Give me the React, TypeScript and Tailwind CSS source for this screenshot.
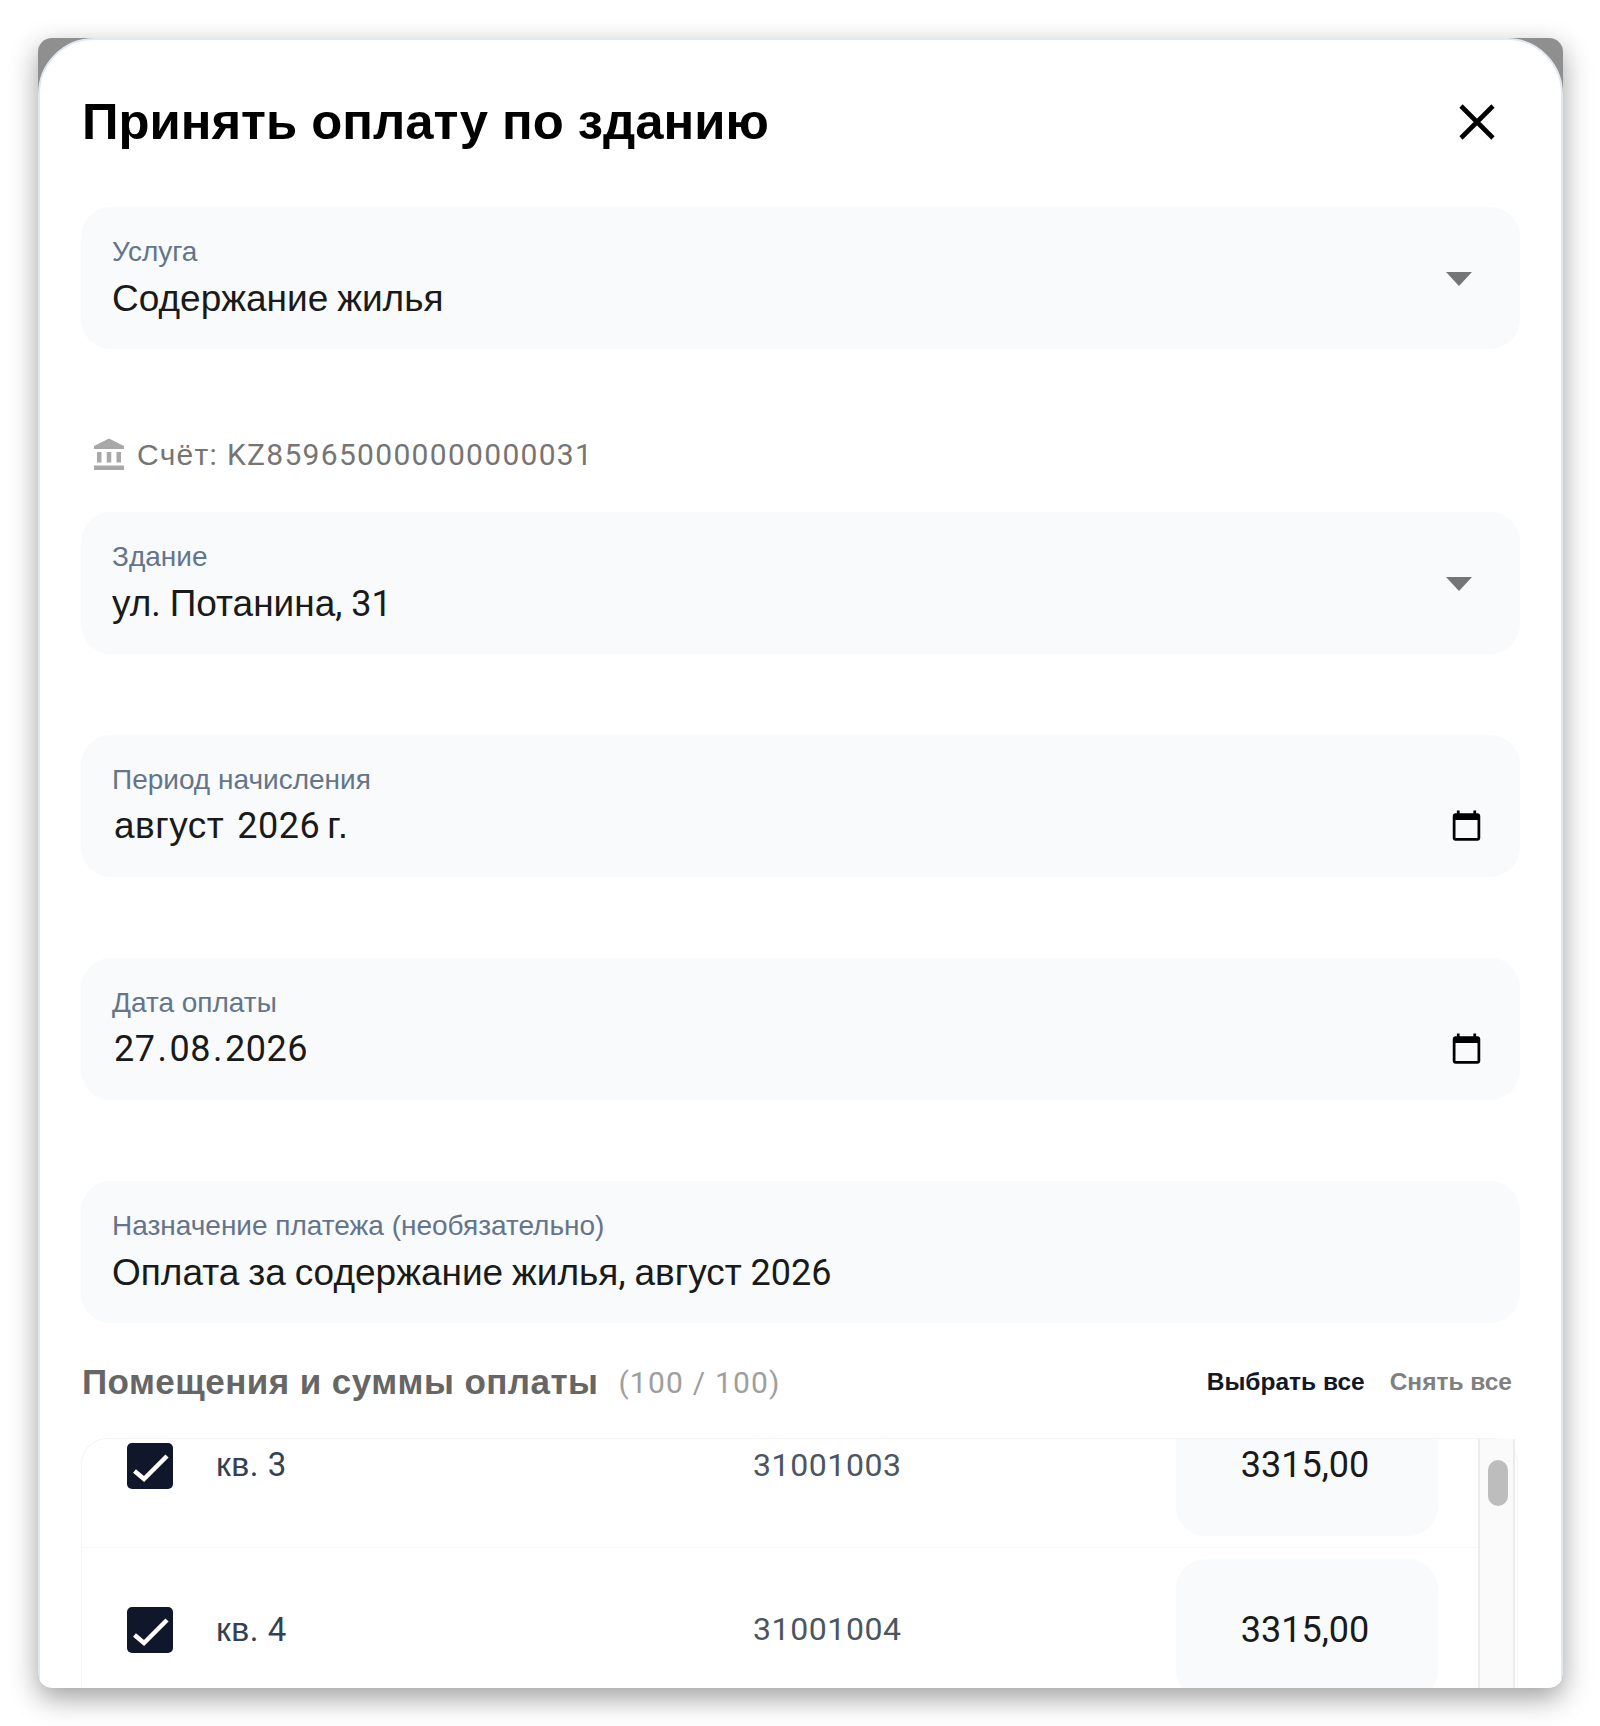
import React from 'react';

const roboto = "font-['Roboto',sans-serif]";
const helv = "font-['Liberation_Sans',Arial,sans-serif]";

function Mix({ text }: { text: string }) {
  return (
    <>
      {text.split(/([А-Яа-яЁё]+)/).map((part, i) => (
        <span key={i} className={i % 2 === 1 ? `text-[1.028em] ${helv}` : roboto}>
          {part}
        </span>
      ))}
    </>
  );
}

function Caret() {
  return (
    <svg width="26" height="14" viewBox="0 0 26 14" className="mt-[2px] shrink-0">
      <path d="M0 0h26L13 14z" fill="#757575" />
    </svg>
  );
}

function CalendarIcon() {
  return (
    <svg width="33" height="33" viewBox="0 0 24 24" className="mt-[38px] shrink-0">
      <path
        d="M20 3h-1V1h-2v2H7V1H5v2H4c-1.1 0-2 .9-2 2v16c0 1.1.9 2 2 2h16c1.1 0 2-.9 2-2V5c0-1.1-.9-2-2-2zm0 18H4V8h16v13z"
        fill="#000"
      />
    </svg>
  );
}

function Field({
  label,
  children,
  date,
  icon,
  className,
}: {
  label: string;
  children: React.ReactNode;
  date?: boolean;
  icon?: React.ReactNode;
  className?: string;
}) {
  return (
    <div className={`flex h-[142px] items-center justify-between rounded-[30px] bg-[#f8fafc] pl-[31px] ${date ? 'pr-[37px]' : 'pr-[48px]'} ${className ?? ''}`}>
      <div>
        <div className={`text-[28px] leading-[36px] text-[#64748b] ${helv}`}>{label}</div>
        <div className={`mt-[4px] text-[36px] leading-[48px] text-[#1a1a1a] ${date ? 'pl-[2px]' : ''}`}>{children}</div>
      </div>
      {icon}
    </div>
  );
}

function Check() {
  return (
    <div className="flex h-[46px] w-[46px] shrink-0 items-center justify-center rounded-[5px] bg-[#10172a]">
      <svg width="46" height="46" viewBox="0 0 46 46">
        <path d="M7.5 28l9.5 8L40 13" fill="none" stroke="#fff" strokeWidth="4.5" />
      </svg>
    </div>
  );
}

function Row({ name, code, last }: { name: string; code: string; last?: boolean }) {
  return (
    <div className={`flex h-[164px] items-center pl-[45px] ${last ? '' : 'border-b border-[#f5f7fa]'}`}>
      <Check />
      <div className="ml-[43px] mt-[-2px] w-[537px] text-[33px] tracking-[0.5px] text-[#334155]">
        <Mix text={name} />
      </div>
      <div className={`mt-[-2px] w-[423px] text-[32px] tracking-[0.6px] text-[#4b5563] ${roboto}`}>{code}</div>
      <div className={`mt-[-1px] flex h-[141px] w-[262px] shrink-0 items-center justify-center rounded-[30px] bg-[#f8fafc] pr-[4px] text-[36px] text-[#1a1a1a] ${roboto}`}>
        3315,00
      </div>
    </div>
  );
}

export default function App() {
  return (
    <div className="h-[1726px] bg-white py-[38px] pl-[38px] pr-[37px]">
      <div className="h-[1650px] overflow-hidden rounded-[14px] bg-[#8f8f8f] shadow-[0_10px_28px_rgba(0,0,0,0.38)]">
        <div className="h-[1700px] rounded-t-[56px] border-2 border-[#e2e8f0] bg-white px-[41px]">
          {/* Header */}
          <div className="mt-[42px] flex h-[80px] items-center justify-between pl-px pr-[25px]">
            <h1 className={`text-[50.8px] font-bold leading-none text-black ${helv}`}>Принять оплату по зданию</h1>
            <svg width="36" height="36" viewBox="0 0 36 36">
              <path d="M2 2l32 32M34 2L2 34" stroke="#000" strokeWidth="4.6" fill="none" />
            </svg>
          </div>

          <Field className="mt-[45px]" label="Услуга" icon={<Caret />}>
            <Mix text="Содержание жилья" />
          </Field>

          <div className="mt-[85px] flex h-[40px] items-center pl-[10px] text-[30px] tracking-[1.3px] text-[#757575]">
            <svg width="36" height="36" viewBox="0 0 24 24" className="mr-[10px] mt-px shrink-0">
              <path d="M4 10h3v7H4zM10.5 10h3v7h-3zM2 19h20v3H2zM17 10h3v7h-3zM12 1 2 6v2h20V6z" fill="#a8a8a8" />
            </svg>
            <span className={roboto}>
              <span className={helv}>Счёт</span>: KZ859650000000000031
            </span>
          </div>

          <Field className="mt-[38px]" label="Здание" icon={<Caret />}>
            <Mix text="ул. Потанина, 31" />
          </Field>

          <Field className="mt-[81px]" label="Период начисления" date icon={<CalendarIcon />}>
            <span className="flex items-baseline">
              <span className={`mr-[13px] text-[37px] tracking-[0.5px] ${helv}`}>август</span>
              <span className={`mr-[7px] tracking-[0.5px] ${roboto}`}>2026</span>
              <span className={`text-[37px] tracking-[1.5px] ${helv}`}>г.</span>
            </span>
          </Field>

          <Field className="mt-[81px]" label="Дата оплаты" date icon={<CalendarIcon />}>
            <span className={`flex items-baseline tracking-[0.5px] ${roboto}`}>
              <span>27</span>
              <span className="px-[2px]">.</span>
              <span>08</span>
              <span className="px-[2px]">.</span>
              <span>2026</span>
            </span>
          </Field>

          <Field className="mt-[81px]" label="Назначение платежа (необязательно)">
            <Mix text="Оплата за содержание жилья, август 2026" />
          </Field>

          {/* Rooms */}
          <div className="mt-[39px] flex h-[40px] items-center justify-between pl-px pr-[8px]">
            <div className="flex items-center">
              <span className={`text-[35px] font-bold tracking-[0.45px] text-[#666666] ${helv}`}>Помещения и суммы оплаты</span>
              <span className={`ml-[20px] text-[30px] tracking-[1.2px] text-[#9e9e9e] ${roboto}`}>(100 / 100)</span>
            </div>
            <div className={`flex items-center gap-[25px] text-[24.5px] font-bold ${helv}`}>
              <span className="text-[#111827]">Выбрать все</span>
              <span className="text-[#808080]">Снять все</span>
            </div>
          </div>

          <div className="mt-[36px] flex h-[300px] w-[1437px] rounded-t-[26px] border border-b-0 border-[#f1f5f9]">
            <div className="w-[1396px] shrink-0 overflow-hidden">
              <div className="mt-[-55px]">
                <Row name="кв. 3" code="31001003" />
                <Row name="кв. 4" code="31001004" last />
              </div>
            </div>
            <div className="w-[37px] shrink-0 border-x-2 border-[#ececec] bg-[#fafafa] pl-[8px] pt-[21px]">
              <div className="h-[46px] w-[20px] rounded-full bg-[#bdbdbd]" />
            </div>
          </div>
        </div>
      </div>
    </div>
  );
}
